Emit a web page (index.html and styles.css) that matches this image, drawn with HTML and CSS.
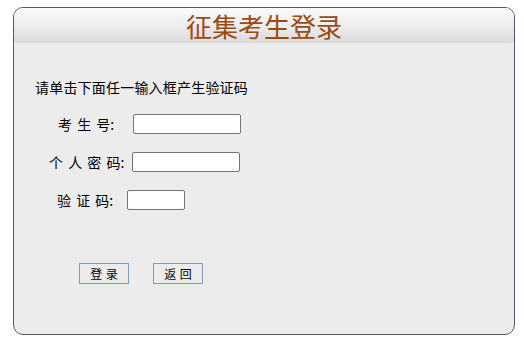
FILE: index.html
```html
<!DOCTYPE html>
<html lang="zh-CN">
<head>
<meta charset="utf-8">
<title>征集考生登录</title>
<link rel="stylesheet" href="styles.css">
</head>
<body>
<div class="panel">
  <div class="panel-head">征集考生登录</div>
  <div class="panel-body">
    <p class="hint">请单击下面任一输入框产生验证码</p>
    <div class="row row-1">
      <span class="label">考 生 号:</span>
      <input class="field" type="text">
    </div>
    <div class="row row-2">
      <span class="label">个 人 密 码:</span>
      <input class="field" type="password">
    </div>
    <div class="row row-3">
      <span class="label">验 证 码:</span>
      <input class="field field-short" type="text">
    </div>
    <div class="actions">
      <button class="btn" type="button">登 录</button>
      <button class="btn" type="button">返 回</button>
    </div>
  </div>
</div>
</body>
</html>
```
FILE: styles.css
```css
* { box-sizing: border-box; }
html, body { margin: 0; padding: 0; background: #ffffff; }
body {
  font-family: "Noto Sans CJK SC", "Noto Sans", sans-serif;
  font-size: 14px;
  color: #000;
}
.panel {
  margin: 7px 9px 0 13px;
  width: 502px;
  height: 328px;
  border: 1px solid #4c5a6e;
  border-radius: 10px;
  background: #ececec;
  overflow: hidden;
}
.panel-head {
  height: 35px;
  background: linear-gradient(to bottom, #fafafa 0%, #ececec 55%, #d9d9d9 100%);
  text-align: center;
  color: #9c4a12;
  font-size: 26px;
  line-height: 35px;
}
.panel-body {
  padding: 35px 0 0 21px;
}
.hint {
  margin: 0;
  line-height: 18px;
  letter-spacing: 0.2px;
}
.row {
  display: flex;
  align-items: center;
  height: 20px;
}
.row-1 { margin-top: 18px; padding-left: 23px; }
.row-2 { margin-top: 18px; padding-left: 14px; }
.row-3 { margin-top: 18px; padding-left: 22px; }
.label { word-spacing: 2px; white-space: pre; line-height: 20px; }
.row-1 .field { margin-left: 19px; }
.row-2 .field { margin-left: 8px; }
.row-3 .field { margin-left: 14px; }
.field {
  width: 108px;
  height: 20px;
  margin: 0;
  padding: 0 3px;
  border: 1px solid #747474;
  border-radius: 2px;
  background: #fff;
  font: inherit;
}
.field-short { width: 58px; }
.actions {
  display: flex;
  gap: 24px;
  margin-top: 53px;
  padding-left: 44px;
}
.btn {
  width: 50px;
  height: 21px;
  padding: 0;
  border: 1px solid #7f9db9;
  background: #ececec;
  font: inherit;
  font-size: 12px;
  line-height: 19px;
  word-spacing: 1px;
  color: #000;
}
```
